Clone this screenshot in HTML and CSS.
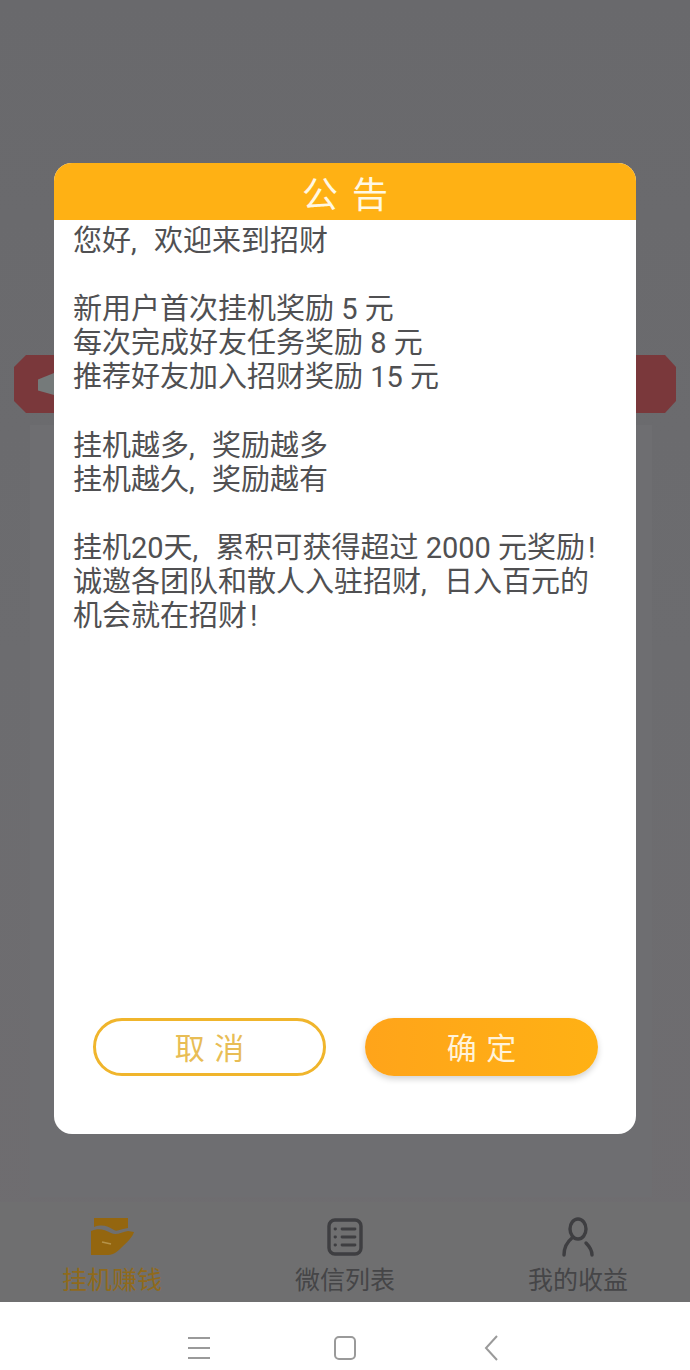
FILE: index.html
```html
<!DOCTYPE html>
<html>

<head>
    <title>招财</title>
    <link rel="stylesheet" href="styles.css">
</head>

<body>
    <div class="screen">
        <div class="app">
            <div class="app-top">
                <div class="banner-row">
                    <div class="banner banner-left">
                        <div class="banner-arrow"></div>
                    </div>
                    <div class="banner banner-right"></div>
                </div>
                <div class="panel"></div>
            </div>
            <div class="tabbar">
                <div class="tab tab-active">
                    <svg class="tab-icon" viewBox="0 0 44 38">
                        <path fill="#94660f" d="M4 0H38V10C31 11 27 14 24 12C18 8 12 6 4 9Z" />
                        <path fill="#94660f" d="M1 13C8 10 14 11 21 15C26 18 32 14 38 13L44 14C42 20 37 24 32 29C28 33 24 37 18 37H1Z" />
                        <path fill="none" stroke="#b5934a" stroke-width="1.5" d="M12 24L21 26" />
                    </svg>
                    <span>挂机赚钱</span>
                </div>
                <div class="tab">
                    <svg class="tab-icon" viewBox="0 0 36 38" fill="none" stroke="#3e3e41" stroke-linecap="round">
                        <rect x="2" y="2" width="32" height="34" rx="6" stroke-width="3.4" />
                        <path stroke-width="2.8" d="M15 11H28M15 19H28M15 27H28M8 11H8.5M8 19H8.5M8 27H8.5" />
                    </svg>
                    <span>微信列表</span>
                </div>
                <div class="tab">
                    <svg class="tab-icon" viewBox="0 0 36 38" fill="none" stroke="#3e3e41" stroke-width="3.4" stroke-linecap="round">
                        <ellipse cx="18" cy="11" rx="8" ry="10" />
                        <path d="M12 20C7 24 4 30 4 37M26 25C29 28 32 32 32 37" />
                    </svg>
                    <span>我的收益</span>
                </div>
            </div>
        </div>

        <div class="navbar">
            <svg class="nav-icon" viewBox="0 0 24 24" fill="none" stroke="#9a9a9a" stroke-width="2">
                <path d="M1 2H23M1 12H23M1 22H23" />
            </svg>
            <svg class="nav-icon" viewBox="0 0 24 24" fill="none" stroke="#9a9a9a" stroke-width="2">
                <rect x="2" y="1" width="20" height="22" rx="4" />
            </svg>
            <svg class="nav-icon" viewBox="0 0 24 24" fill="none" stroke="#9a9a9a" stroke-width="2">
                <path d="M18 0L7 12L18 24" />
            </svg>
        </div>

        <div class="dialog">
            <div class="dialog-title">公 告</div>
            <div class="dialog-body">
                <p>您好<span class="comma">,</span> 欢迎来到招财</p>
                <p>新用户首次挂机奖励 5 元<br>每次完成好友任务奖励 8 元<br>推荐好友加入招财奖励 15 元</p>
                <p>挂机越多<span class="comma">,</span> 奖励越多<br>挂机越久<span class="comma">,</span> 奖励越有</p>
                <p>挂机20天<span class="comma">,</span> 累积可获得超过 2000 元奖励<span class="bang">!</span><br>诚邀各团队和散人入驻招财<span class="comma">,</span> 日入百元的<br>机会就在招财<span class="bang">!</span></p>
            </div>
            <div class="dialog-buttons">
                <div class="btn btn-cancel">取 消</div>
                <div class="btn btn-ok">确 定</div>
            </div>
        </div>
    </div>
</body>

</html>
```

FILE: styles.css
```css
* {
    padding: 0;
    margin: 0;
    box-sizing: border-box;
}

body {
    width: 690px;
    height: 1370px;
    overflow: hidden;
    font-family: "Noto Sans CJK SC", sans-serif;
}

.screen {
    position: relative;
    width: 690px;
    height: 1370px;
    display: flex;
    flex-direction: column;
    background-color: #fff;
}

.app {
    height: 1302px;
    display: flex;
    flex-direction: column;
    background: linear-gradient(#69696c, #6c6c6f 50%, #6f6d70);
}

.app-top {
    flex: 1;
    display: flex;
    flex-direction: column;
    padding: 355px 14px 0;
}

.banner-row {
    height: 58px;
    display: flex;
    justify-content: space-between;
}

.banner {
    width: 60px;
    display: flex;
    align-items: center;
    justify-content: flex-end;
    background-color: #7a383b;
}

.banner-left {
    clip-path: polygon(12px 0, 100% 0, 100% 100%, 12px 100%, 0 46px, 0 12px);
}

.banner-right {
    clip-path: polygon(0 0, 49px 0, 100% 12px, 100% 46px, 49px 100%, 0 100%);
}

.banner-arrow {
    width: 16px;
    height: 22px;
    margin-right: 20px;
    background-color: #757a7a;
    clip-path: polygon(0 30%, 100% 0, 100% 100%, 0 80%);
}

.panel {
    width: 622px;
    height: 772px;
    margin: 12px 0 0 16px;
    background-color: #6e6e71;
}

.tabbar {
    height: 100px;
    display: flex;
    justify-content: space-between;
    background-color: #6f6f70;
    padding: 16px 62px 0;
}

.tab {
    width: 100px;
    display: flex;
    flex-direction: column;
    align-items: center;
    gap: 8px;
    font-size: 25px;
    line-height: 28px;
    white-space: nowrap;
    color: #454547;
}

.tab-active {
    color: #8f6a1c;
}

.tab-active .tab-icon {
    width: 44px;
}

.tab-icon {
    width: 36px;
    height: 38px;
    overflow: visible;
}

.navbar {
    height: 68px;
    display: flex;
    justify-content: center;
    gap: 122px;
    padding: 34px 0 0 0;
}

.nav-icon {
    width: 24px;
    height: 24px;
    overflow: visible;
}

.dialog {
    position: absolute;
    left: 54px;
    top: 163px;
    width: 582px;
    height: 971px;
    display: flex;
    flex-direction: column;
    background-color: #fff;
    border-radius: 18px;
    overflow: hidden;
}

.dialog-title {
    height: 57px;
    text-align: center;
    font-size: 36px;
    line-height: 58px;
    word-spacing: 6px;
    color: #fff8e4;
    background-color: #ffb114;
}

.dialog-body {
    flex: 1;
    padding: 4px 19px 0;
    font-family: Roboto, "Noto Sans CJK SC", sans-serif;
    font-size: 29px;
    line-height: 34.1px;
    color: #505052;
}

.dialog-body p {
    margin-bottom: 34.1px;
}

.comma {
    margin-right: 10px;
}

.bang {
    margin-left: 3px;
}

.dialog-buttons {
    display: flex;
    justify-content: space-between;
    padding: 0 38px 58px 39px;
}

.btn {
    width: 233px;
    height: 58px;
    text-align: center;
    font-size: 30px;
    line-height: 56px;
    word-spacing: 3px;
    border-radius: 29px;
}

.btn-cancel {
    color: #e8bd55;
    line-height: 50px;
    border: 3px solid #f0b52c;
}

.btn-ok {
    color: #fff3da;
    background: linear-gradient(90deg, #ffa41a, #ffb114);
    box-shadow: 0 3px 6px rgba(0, 0, 0, 0.18);
}
```
